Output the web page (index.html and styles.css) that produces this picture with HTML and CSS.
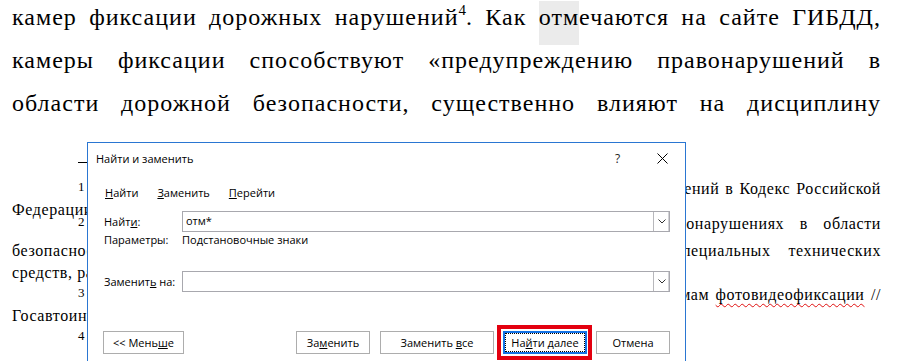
FILE: index.html
```html
<!DOCTYPE html>
<html lang="ru">
<head>
    <meta charset="UTF-8">
    <meta name="viewport" content="width=device-width, initial-scale=1.0">
    <title>Найти и заменить</title>
    <link rel="stylesheet" href="styles.css">
</head>
<body>
    <div class="page">
        <div class="doc">
            <p class="doc-line">камер фиксации дорожных нарушений<sup class="ref">4</sup>. Как <span class="find-hit">отм</span>ечаются на сайте ГИБДД,</p>
            <p class="doc-line">камеры фиксации способствуют «предупреждению правонарушений в</p>
            <p class="doc-line">области дорожной безопасности, существенно влияют на дисциплину</p>
        </div>

        <div class="fn-sep"></div>
        <div class="footnotes">
            <div class="fn-line fn-first h23"><span class="fn-num">1</span> Федеральный закон от 26.12.2018 № 512-ФЗ «О внесении изменений и дополнений в Кодекс Российской</div>
            <div class="fn-line last h12">Федерации об административных правонарушениях» // СЗ РФ. 2018. № 53.</div>
            <div class="fn-line fn-first h29"><span class="fn-num">2</span> Кодекс Российской Федерации. Глава 12. Об административных правонарушениях в области</div>
            <div class="fn-line h22">безопасности дорожного движения, выявленных работающими автоматически специальных технических</div>
            <div class="fn-line last h20">средств, работающих в автоматическом режиме.</div>
            <div class="fn-line fn-first h23"><span class="fn-num">3</span> Официальный сайт Госавтоинспекции МВД России. Раздел о камерах и системам <span class="spell">фотовидеофиксации</span> //</div>
            <div class="fn-line last h20">Госавтоинспекция. URL: https://гибдд.рф/about/ (дата обращения: 12.03.2024).</div>
            <div class="fn-line fn-first last h20"><span class="fn-num">4</span> Там же.</div>
        </div>
    </div>

    <div class="dialog">
        <div class="dlg-title">
            <span class="dlg-caption">Найти и заменить</span>
            <span class="dlg-ctrl dlg-help">?</span>
            <span class="dlg-ctrl">
                <svg width="11" height="11" viewBox="0 0 11 11"><path d="M0.5 0.5 L10.5 10.5 M10.5 0.5 L0.5 10.5" stroke="#000" stroke-width="1" fill="none"/></svg>
            </span>
        </div>

        <div class="dlg-tabs">
            <span class="tab"><u>Н</u>айти</span>
            <span class="tab"><u>З</u>аменить</span>
            <span class="tab"><u>П</u>ерейти</span>
        </div>

        <div class="dlg-form">
            <div class="form-row">
                <span class="form-label">Найт<u>и</u>:</span>
                <div class="combo">
                    <span class="combo-value">отм*</span>
                    <span class="combo-arrow">
                        <svg width="8" height="5" viewBox="0 0 8 5"><path d="M0.5 0.5 L4 4 L7.5 0.5" stroke="#333" stroke-width="1" fill="none"/></svg>
                    </span>
                </div>
            </div>
            <div class="form-row form-note">
                <span class="form-label">Параметры:</span>
                <span>Подстановочные знаки</span>
            </div>
            <div class="form-row spaced">
                <span class="form-label">Заменит<u>ь</u> на:</span>
                <div class="combo">
                    <span class="combo-value"></span>
                    <span class="combo-arrow">
                        <svg width="8" height="5" viewBox="0 0 8 5"><path d="M0.5 0.5 L4 4 L7.5 0.5" stroke="#333" stroke-width="1" fill="none"/></svg>
                    </span>
                </div>
            </div>
        </div>

        <div class="dlg-buttons">
            <button class="btn btn-less">&lt;&lt; Мень<u>ш</u>е</button>
            <button class="btn btn-replace">За<u>м</u>енить</button>
            <button class="btn btn-all">Заменить <u>в</u>се</button>
            <span class="focus-mark">
                <button class="btn btn-next"><span class="focus-rect">На<u>й</u>ти далее</span></button>
            </span>
            <button class="btn btn-cancel">Отмена</button>
        </div>

        <div class="dlg-section">Параметры поиска</div>
    </div>
</body>
</html>
```

FILE: styles.css
```css
html, body {
    margin: 0;
    height: 100%;
    overflow: hidden;
    background: #fff;
}
body {
    position: relative;
    font-family: "Liberation Serif", "DejaVu Serif", serif;
    color: #000;
}
.page {
    padding: 0 24px 0 12px;
}
.doc {
    margin-top: -4px;
}
.doc-line {
    margin: 0;
    font-size: 24px;
    letter-spacing: 1px;
    line-height: 43px;
    text-align: justify;
    text-align-last: justify;
}
.ref {
    font-size: 15px;
    letter-spacing: 0;
    line-height: 0;
    vertical-align: 10px;
}
.find-hit {
    background: #ebebeb;
    padding: 3px 0 15px;
}
.fn-sep {
    margin: 37px 0 0 66px;
    width: 40px;
    border-top: 1px solid #000;
}
.footnotes {
    margin-top: 14px;
}
.fn-line {
    font-size: 16px;
    letter-spacing: 0.6px;
    line-height: 20px;
    white-space: nowrap;
    text-align: justify;
    text-align-last: justify;
}
.fn-line.last {
    text-align-last: left;
}
.fn-first {
    padding-left: 66px;
}
.fn-num {
    font-size: 13px;
    letter-spacing: 0;
    vertical-align: 3px;
}
.h12 { height: 12px; }
.h20 { height: 20px; }
.h22 { height: 22px; }
.h23 { height: 23px; }
.h29 { height: 29px; }
.spell {
    text-decoration: underline wavy #e01010;
    text-decoration-thickness: 1px;
    text-underline-offset: 3px;
}

/* dialog */
.dialog {
    position: absolute;
    left: 87px;
    top: 142px;
    width: 599px;
    height: 240px;
    box-sizing: border-box;
    border: 1px solid #2a76d2;
    background: #fff;
    font-family: "Open Sans", "Noto Sans", sans-serif;
    font-size: 11px;
    color: #000;
}
.dlg-title {
    display: flex;
    align-items: center;
    height: 30px;
}
.dlg-caption {
    padding-left: 8px;
}
.dlg-ctrl {
    width: 45px;
    height: 30px;
    display: flex;
    align-items: center;
    justify-content: center;
}
.dlg-help {
    margin-left: auto;
    font-size: 12px;
    color: #222;
}
.dlg-tabs {
    display: flex;
    gap: 19px;
    margin-top: 12px;
    padding-left: 17px;
    line-height: 16px;
}
.dlg-form {
    margin-top: 10px;
    padding: 0 15px 0 16px;
}
.form-row {
    display: flex;
    align-items: center;
}
.form-row.spaced {
    margin-top: 23px;
}
.form-note {
    line-height: 16px;
}
.form-label {
    width: 78px;
    flex: none;
}
.combo {
    flex: 1;
    display: flex;
    height: 21px;
    box-sizing: border-box;
    border: 1px solid #a8a8ae;
}
.combo-value {
    flex: 1;
    padding-left: 3px;
    line-height: 18px;
}
.combo-arrow {
    width: 15px;
    border-left: 1px solid #b8b8bc;
    box-shadow: inset -1px 0 #d2d2d6;
    display: flex;
    align-items: center;
    justify-content: center;
}
.dlg-buttons {
    display: flex;
    align-items: center;
    margin-top: 39px;
    padding: 0 15px;
}
.btn {
    height: 23px;
    box-sizing: border-box;
    border: 1px solid #adadad;
    background: #fff;
    padding: 0;
    font: inherit;
    line-height: 20px;
    color: #000;
    text-align: center;
}
.btn-less { width: 81px; }
.btn-replace { width: 74px; margin-left: auto; }
.btn-all { width: 114px; margin-left: 10px; }
.btn-cancel { width: 74px; margin-left: 4px; }
.focus-mark {
    display: flex;
    border: 4px solid #e3000f;
    padding: 2px 1px 2px 2px;
    margin: -6px 0 -6px 3px;
}
.btn-next {
    width: 84px;
    border: 2px solid #1473e6;
}
.focus-rect {
    display: block;
    height: 17px;
    line-height: 17px;
    border: 1px dotted #000;
}
.dlg-section {
    margin-top: 4px;
    padding-left: 15px;
    line-height: 16px;
}
```
